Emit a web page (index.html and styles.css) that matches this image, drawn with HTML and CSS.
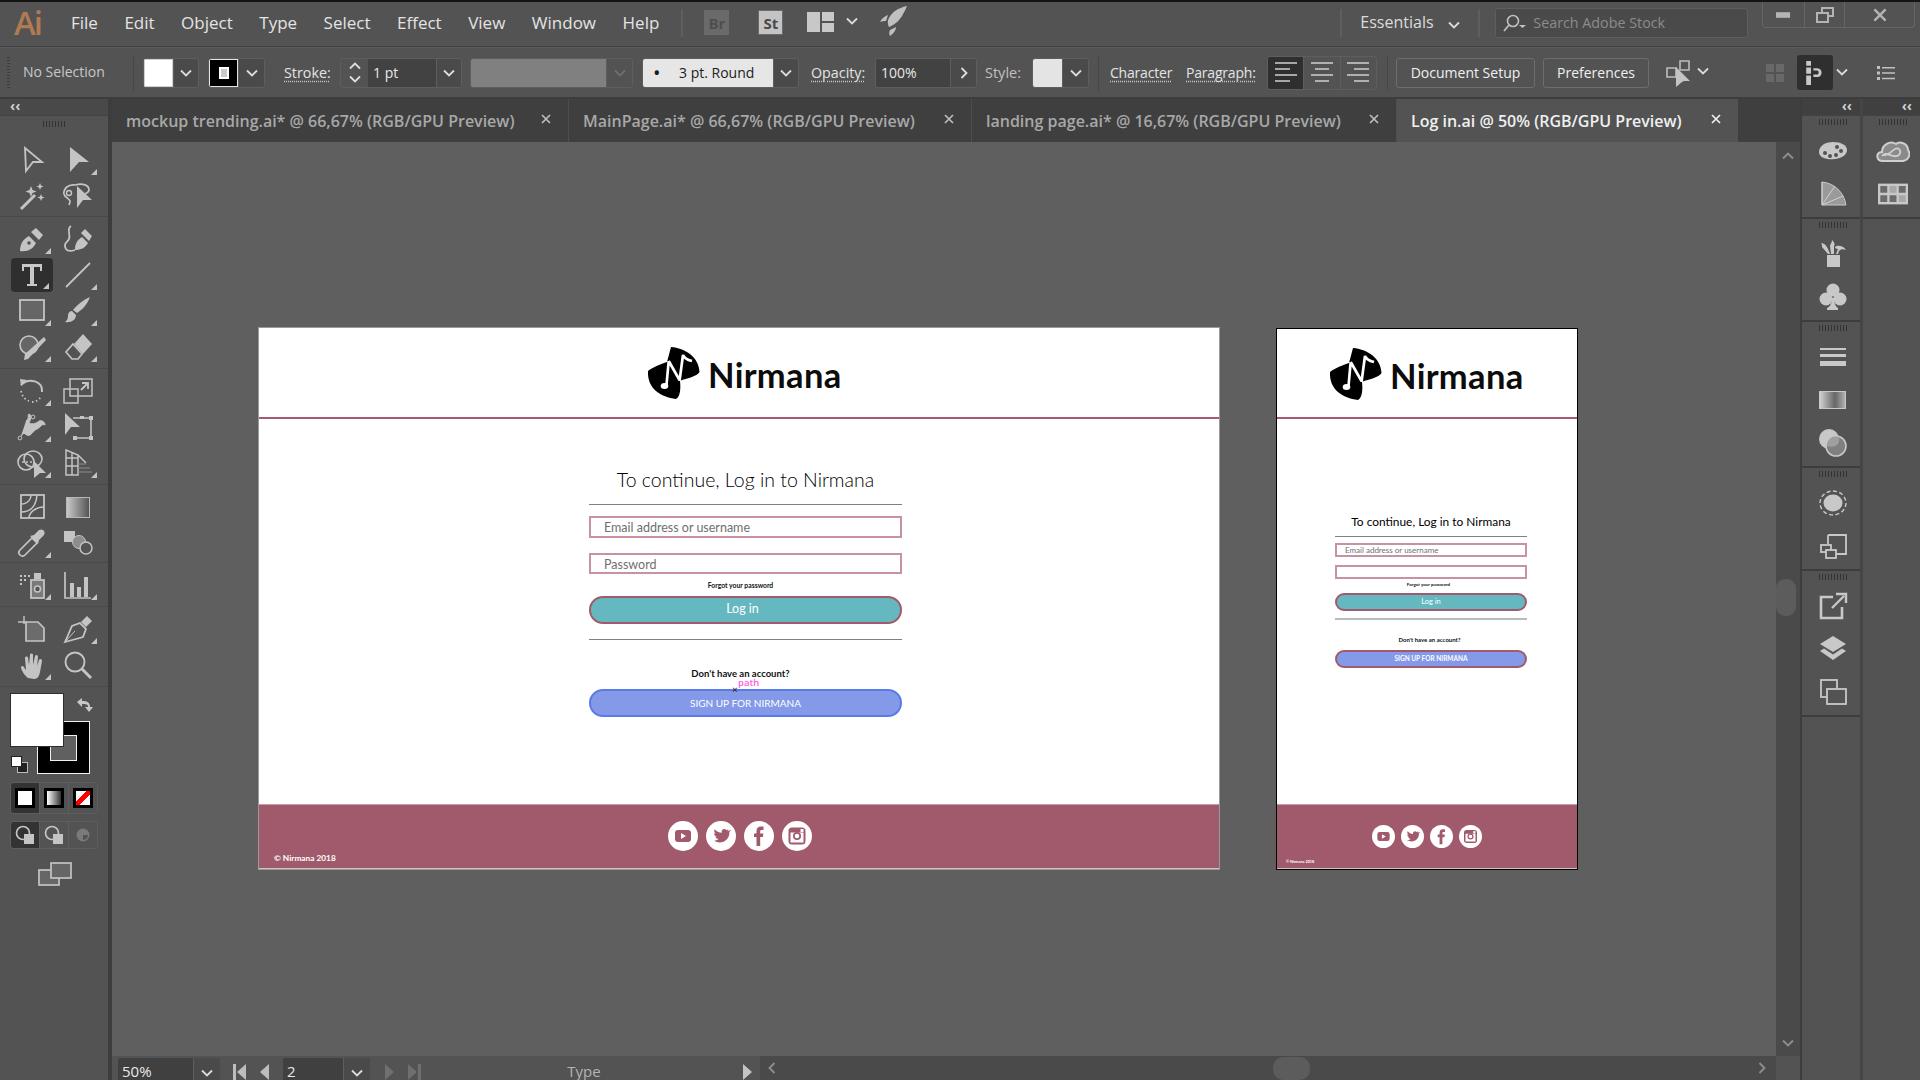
FILE: index.html
```html
<!DOCTYPE html>
<html lang="en">
<head>
<meta charset="utf-8">
<title>Log in.ai @ 50% (RGB/GPU Preview)</title>
<link rel="stylesheet" href="styles.css">
</head>
<body>
<svg class="defs" width="0" height="0" aria-hidden="true">
  <symbol id="chev" viewBox="0 0 12 8"><path d="M1 1.5l5 5 5-5" fill="none" stroke="currentColor" stroke-width="1.8"/></symbol>
  <symbol id="cross" viewBox="0 0 10 10"><path d="M1 1l8 8M9 1l-8 8" fill="none" stroke="currentColor" stroke-width="1.7"/></symbol>
  <symbol id="logo" viewBox="0 0 53 52">
    <path d="M24 0C38 1 52 10 52.500 25C50 29 42 31 35 33L33 34C34 42 33 50 29 52C14 50 0 42 1 24C6 20 14 17 20 15z" fill="#000"/>
    <path d="M21.700 14L19.500 38M21.700 14L32.500 33M32.500 34L36 8C37 11 41 13 45 14" fill="none" stroke="#fff" stroke-width="2.700"/>
    <ellipse cx="17.500" cy="39" rx="3.800" ry="3" fill="#fff"/>
  </symbol>
  <symbol id="yt" viewBox="0 0 30 30"><circle cx="15" cy="15" r="15" fill="#fff"/><rect x="7" y="9" width="16" height="12" rx="3" fill="#a05a6c"/><path d="M13 12l5 3-5 3z" fill="#fff"/></symbol>
  <symbol id="tw" viewBox="0 0 30 30"><circle cx="15" cy="15" r="15" fill="#fff"/><path d="M23 9.500c-.7.400-1.400.600-2 .700.700-.500 1.300-1.100 1.500-2-.7.400-1.400.700-2.200.800-1.700-1.900-5.300-.6-4.600 2.700-2.800-.1-5.300-1.500-7-3.500-.9 1.600-.4 3.500 1 4.500-.6 0-1.100-.2-1.600-.4 0 1.700 1.200 3.100 2.800 3.500-.5.100-1 .1-1.500 0 .5 1.300 1.700 2.300 3.200 2.300-1.500 1.200-3.300 1.700-5 1.500 7 4.400 16.300.6 15.800-8.800.7-.500 1.200-1.100 1.600-1.800z" fill="#a05a6c"/></symbol>
  <symbol id="fb" viewBox="0 0 30 30"><circle cx="15" cy="15" r="15" fill="#fff"/><path d="M12.500 25v-9H10v-3.500h2.500V10c0-3 1.700-4.500 4.300-4.500H19.500V9h-1.800c-1.200 0-1.500.6-1.500 1.500v2h3.200l-.5 3.500h-2.700v9z" fill="#a05a6c"/></symbol>
  <symbol id="ig" viewBox="0 0 30 30"><circle cx="15" cy="15" r="15" fill="#fff"/><rect x="6.500" y="6.500" width="17" height="17" rx="3.500" fill="#a05a6c"/><rect x="8.500" y="11.500" width="13" height="10" fill="#fff"/><circle cx="15" cy="15" r="4" fill="#a05a6c"/><circle cx="15" cy="15" r="2.300" fill="#fff"/><rect x="18.500" y="8" width="3" height="3" fill="#fff"/></symbol>
</svg>

<div class="app">
  <div class="topline"></div>

  <header class="menubar">
    <div class="ai-logo">Ai</div>
    <nav class="menu">
      <span>File</span><span>Edit</span><span>Object</span><span>Type</span><span>Select</span><span>Effect</span><span>View</span><span>Window</span><span>Help</span>
    </nav>
    <div class="vsep sep-a"></div>
    <div class="app-badge br">Br</div>
    <div class="app-badge st">St</div>
    <svg class="layout-ic" viewBox="0 0 27 20"><path d="M0 0h13v20H0zM15 0h12v9H15zM15 11h12v9H15z" fill="#c8c8c8"/></svg>
    <svg class="chev mb-chev"><use href="#chev"/></svg>
    <svg class="rocket" viewBox="0 0 27 30"><path d="M27 0C18 2 12 6 9 12c-2 3-1 7 0 9 6-2 12-8 14-13 2-3 3-6 4-8zM8 9c-3 1-6 3-8 7 2-1 4-1 6-1zM16 21c0 3-2 6-6 9-1-2-1-4 0-6z" fill="#c0c0c0"/></svg>
    <div class="vsep sep-b"></div>
    <div class="workspace-name">Essentials</div>
    <svg class="chev ws-chev"><use href="#chev"/></svg>
    <div class="vsep sep-c"></div>
    <div class="search">
      <svg class="search-ic" viewBox="0 0 26 18"><circle cx="11" cy="7" r="5.500" fill="none" stroke="#c0c0c0" stroke-width="1.600"/><path d="M7 11l-5 6" stroke="#c0c0c0" stroke-width="1.800"/><path d="M17 11h7l-3.500 3z" fill="#c0c0c0"/></svg>
      <span>Search Adobe Stock</span>
    </div>
    <div class="winctl">
      <div class="wc wc-min"><svg viewBox="0 0 16 8" class="wi"><rect y="1" width="15" height="6" fill="#b4b4b4"/></svg></div>
      <div class="wc wc-max"><svg viewBox="0 0 18 16" class="wi wi-l"><path d="M5 0h13v10h-5v6H0V5h5zM7 2v3h6v3h3V2zM2 7v7h9V7z" fill="#b4b4b4" fill-rule="evenodd"/></svg></div>
      <div class="wc wc-close"><svg class="wi wi-x"><use href="#cross"/></svg></div>
    </div>
  </header>

  <section class="controlbar">
    <div class="grip-v"></div>
    <div class="nosel">No Selection</div>
    <div class="cdiv d1"></div>
    <div class="cgroup g-fill"><div class="swatch white"></div><div class="caret"><svg class="chev"><use href="#chev"/></svg></div></div>
    <div class="cgroup g-stroke"><div class="swatch stroke-sw"><i></i></div><div class="caret"><svg class="chev"><use href="#chev"/></svg></div></div>
    <div class="clabel l-stroke link">Stroke:</div>
    <div class="cgroup g-weight">
      <div class="stepper"><svg class="chev up"><use href="#chev"/></svg><svg class="chev"><use href="#chev"/></svg></div>
      <div class="cinput w-weight">1 pt</div>
      <div class="caret"><svg class="chev"><use href="#chev"/></svg></div>
    </div>
    <div class="cgroup g-gray"><div class="graybox"></div><div class="caret dim"><svg class="chev"><use href="#chev"/></svg></div></div>
    <div class="cgroup g-round"><div class="roundbox"><b>•</b><span>3 pt. Round</span></div><div class="caret"><svg class="chev"><use href="#chev"/></svg></div></div>
    <div class="clabel l-opacity link">Opacity:</div>
    <div class="cgroup g-opacity">
      <div class="cinput w-opacity">100%</div>
      <div class="caret"><svg class="chev right"><use href="#chev"/></svg></div>
    </div>
    <div class="clabel l-style">Style:</div>
    <div class="cgroup g-style"><div class="swatch pale"></div><div class="caret"><svg class="chev"><use href="#chev"/></svg></div></div>
    <div class="cdiv d2"></div>
    <div class="clabel l-char link">Character</div>
    <div class="clabel l-para link">Paragraph:</div>
    <div class="aligns">
      <div class="alg on"><svg viewBox="0 0 24 22"><path d="M1 1h22M1 7h15M1 13h22M1 19h15" stroke="#d0d0d0" stroke-width="1.600"/></svg></div>
      <div class="alg"><svg viewBox="0 0 24 22"><path d="M1 1h22M5 7h14M1 13h22M5 19h14" stroke="#d0d0d0" stroke-width="1.600"/></svg></div>
      <div class="alg"><svg viewBox="0 0 24 22"><path d="M1 1h22M8 7h15M1 13h22M8 19h15" stroke="#d0d0d0" stroke-width="1.600"/></svg></div>
    </div>
    <div class="cdiv d3"></div>
    <div class="btn b-doc">Document Setup</div>
    <div class="btn b-pref">Preferences</div>
    <svg class="tr-ic" viewBox="0 0 26 28"><path d="M2 9h9v9H2zM15 2h9v9H15z" fill="#535353" stroke="#bdbdbd" stroke-width="1.600"/><path d="M11 8l14 14h-6l-2 1-6 5z" fill="#c4c4c4"/></svg>
    <svg class="chev tr-chev"><use href="#chev"/></svg>
    <svg class="gr-ic" viewBox="0 0 18 18"><path d="M0 0h8v8H0zM10 0h8v8h-8zM0 10h8v8H0zM10 10h8v8h-8z" fill="#696969"/></svg>
    <div class="snap"><svg viewBox="0 0 22 30"><path d="M0 0h6v6H0zM0 8h6v8H0zM0 18h6v12H0zM9 9h5c7 0 7 11 0 11H9v-3h5c2 0 2-5 0-5H9z" fill="#c8c8c8"/></svg></div>
    <svg class="chev sn-chev"><use href="#chev"/></svg>
    <svg class="ls-ic" viewBox="0 0 18 14"><path d="M0 0h3v3H0zM5 1h13v1.500H5zM0 5.500h3v3H0zM5 6.300h13v1.500H5zM0 11h3v3H0zM5 11.700h13v1.500H5z" fill="#c0c0c0"/></svg>
  </section>

  <main class="workspace">
    <aside class="toolbar">
      <div class="panel-head"><span class="collapse">‹‹</span></div>
      <div class="grip-h"></div>
      <div class="tgroup first">
        <div class="tool"><svg viewBox="0 0 30 30"><path d="M8 3l17 14h-9l-7 9z" fill="none" stroke="#c4c4c4" stroke-width="1.800"/></svg></div>
        <div class="tool fly"><svg viewBox="0 0 30 30"><path d="M7 2l19 15H16l-9 10z" fill="#c4c4c4"/></svg></div>
        <div class="tool"><svg viewBox="0 0 30 30"><path d="M4 28l14-14" stroke="#c4c4c4" stroke-width="3"/><path d="M14 5l1.500 4 4 1.500-4 1.500-1.500 4-1.500-4-4-1.500 4-1.500zM23 2l1 2.500 2.500 1-2.500 1-1 2.500-1-2.500L19.500 5.500l2.500-1zM24 13l1 2.500 2.500 1-2.500 1-1 2.500-1-2.500-2.500-1 2.500-1z" fill="#c4c4c4"/></svg></div>
        <div class="tool"><svg viewBox="0 0 30 30"><path d="M12 4C5 3 0 8 1 13c1 4 5 4 6 7 0 2-1 4-1 4M12 4c8-2 14 0 14 5 0 2-2 3-4 4" fill="none" stroke="#c4c4c4" stroke-width="1.700"/><circle cx="6" cy="12" r="2.500" fill="none" stroke="#c4c4c4" stroke-width="1.400"/><path d="M14 5l15 14H20l-6 8z" fill="#c4c4c4"/></svg></div>
      </div>
      <div class="tgroup">
        <div class="tool fly"><svg viewBox="0 0 30 30"><path d="M3 27c0-7 3-12 9-15l7 7c-3 6-8 9-16 8zM19 4l7 7-4 5-8-8z" fill="#c4c4c4"/><circle cx="12" cy="19" r="1.800" fill="#535353"/></svg></div>
        <div class="tool"><svg viewBox="0 0 30 30"><path d="M12 26c0-6 2-10 7-13l6 6c-3 5-7 7-13 7zM22 5l7 7-3 5-8-8z" fill="#c4c4c4"/><path d="M8 2C3 5 8 10 6 15c-2 4-6 4-3 10 2 3 6 2 9 1" fill="none" stroke="#c4c4c4" stroke-width="1.800"/></svg></div>
        <div class="tool selected fly"><svg viewBox="0 0 30 30"><path d="M5 4h20v7h-2V7h-6v17h3v2H10v-2h3V7H7v4H5z" fill="#c8c8c8"/></svg></div>
        <div class="tool fly"><svg viewBox="0 0 30 30"><path d="M3 27L27 3" stroke="#c4c4c4" stroke-width="1.800"/></svg></div>
        <div class="tool fly"><svg viewBox="0 0 30 30"><rect x="3" y="4" width="24" height="20" fill="#666" stroke="#c4c4c4" stroke-width="1.800"/></svg></div>
        <div class="tool fly"><svg viewBox="0 0 30 30"><path d="M27 1c-3 8-8 13-13 16l-4-3C14 9 20 4 27 1zM9 15l4 4c0 5-5 8-11 7 3-2 3-5 3-7 0-2 2-4 4-4z" fill="#c4c4c4"/></svg></div>
        <div class="tool fly"><svg viewBox="0 0 30 30"><circle cx="12" cy="13" r="9" fill="#666" stroke="#c4c4c4" stroke-width="1.600"/><path d="M8 22L27 5l2 3L11 27l-4 1z" fill="#c4c4c4"/></svg></div>
        <div class="tool fly"><svg viewBox="0 0 30 30"><path d="M19 2l9 10-9 10-9-10z" fill="#c4c4c4" transform="translate(1 0)"/><path d="M10 12l9 10-4 5H9l-6-7z" fill="#535353" stroke="#c4c4c4" stroke-width="1.700"/></svg></div>
      </div>
      <div class="tgroup">
        <div class="tool fly"><svg viewBox="0 0 30 30"><path d="M4 9C12 1 26 5 25 16" fill="none" stroke="#c4c4c4" stroke-width="2"/><path d="M3 3l7 1-6 6z" fill="#c4c4c4"/><path d="M4 15c1 5 4 9 8 10M15 26c4 0 8-3 9-6" fill="none" stroke="#c4c4c4" stroke-width="1.800" stroke-dasharray="1.500 2.500"/></svg></div>
        <div class="tool"><svg viewBox="0 0 30 30"><rect x="1" y="13" width="14" height="14" fill="none" stroke="#c4c4c4" stroke-width="1.500"/><rect x="7" y="3" width="22" height="17" fill="none" stroke="#c4c4c4" stroke-width="1.500"/><path d="M18 14l6-6M19 7h6v6" fill="none" stroke="#c4c4c4" stroke-width="1.800"/></svg></div>
        <div class="tool fly"><svg viewBox="0 0 30 30"><path d="M9 9c4-3 1-6 3-7 3 1 2 5 0 9 4 2 8 0 10-2 3-1 6 1 6 4-3-2-4 2-8 4-3 1-4 4-7 6-2 1-4 0-6-2l-3 3" fill="#c4c4c4" stroke="#c4c4c4" stroke-width="1"/><circle cx="3" cy="26" r="1.900" fill="#535353" stroke="#c4c4c4"/><circle cx="16" cy="5" r="1.900" fill="#535353" stroke="#c4c4c4"/></svg></div>
        <div class="tool"><svg viewBox="0 0 30 30"><path d="M2 1l15 14H8l-6 8z" fill="#c4c4c4"/><path d="M10 6h18v20H10" fill="none" stroke="#c4c4c4" stroke-width="1.600"/><path d="M26 4h4v4h-4zM26 24h4v4h-4zM17 4h4v3h-4zM10 24h4v4h-4z" fill="#c4c4c4"/></svg></div>
        <div class="tool fly"><svg viewBox="0 0 30 30"><ellipse cx="9" cy="14" rx="8" ry="8" fill="none" stroke="#c4c4c4" stroke-width="1.600"/><ellipse cx="16" cy="11" rx="9" ry="8" fill="none" stroke="#c4c4c4" stroke-width="1.600"/><path d="M5 14h10" stroke="#c4c4c4" stroke-width="1.600" stroke-dasharray="2 2"/><path d="M17 13l12 12h-6l-6 5z" fill="#c4c4c4"/></svg></div>
        <div class="tool fly"><svg viewBox="0 0 30 30"><path d="M3 2l12 5v20H3zM15 7l8 8M3 10h12M3 18h12M9 4v23" fill="none" stroke="#c4c4c4" stroke-width="1.500"/><path d="M15 16h8M15 20h12M15 24h14" stroke="#8b8b8b" stroke-width="1.200"/></svg></div>
      </div>
      <div class="tgroup tight">
        <div class="tool"><svg viewBox="0 0 30 30"><rect x="4" y="3" width="23" height="23" fill="none" stroke="#c4c4c4" stroke-width="1.800"/><path d="M4 12C12 12 14 6 14 3M4 20c9 0 15-4 16-17M12 26c0-5 6-11 15-11" fill="none" stroke="#c4c4c4" stroke-width="1.500"/></svg></div>
        <div class="grad-tool-wrap tool"><div class="grad-ic"></div></div>
        <div class="tool fly"><svg viewBox="0 0 30 30"><path d="M3 27c-2-2-1-4 0-5L15 10l5 5L8 27c-1 1-3 2-5 0z" fill="none" stroke="#c4c4c4" stroke-width="1.700"/><path d="M13 8l4-1 5-5c4-2 7 2 5 5l-5 5-1 4z" fill="#c4c4c4"/></svg></div>
        <div class="tool"><svg viewBox="0 0 30 30"><rect x="1" y="3" width="11" height="11" fill="#c4c4c4"/><circle cx="16" cy="14" r="6.500" fill="#8d8d8d" stroke="#c4c4c4"/><circle cx="23" cy="20" r="6" fill="#535353" stroke="#c4c4c4" stroke-width="1.500"/></svg></div>
      </div>
      <div class="tgroup">
        <div class="tool fly"><svg viewBox="0 0 30 30"><path d="M3 5h2v2H3zM7 5h2v2H7zM11 5h2v2h-2zM3 9h2v2H3zM7 9h2v2H7zM3 13h2v2H3z" fill="#c4c4c4"/><rect x="14" y="10" width="13" height="18" fill="#7a7a7a" stroke="#c4c4c4" stroke-width="1.800"/><rect x="17" y="3" width="7" height="6" fill="#c4c4c4"/><circle cx="20.500" cy="19" r="3" fill="#535353" stroke="#c4c4c4" stroke-width="1.600"/></svg></div>
        <div class="tool fly"><svg viewBox="0 0 30 30"><path d="M2 2v26h26" fill="none" stroke="#c4c4c4" stroke-width="1.700"/><path d="M7 13h4v14H7zM14 17h4v10h-4zM21 7h4v20h-4z" fill="#c4c4c4"/></svg></div>
      </div>
      <div class="tgroup">
        <div class="tool"><svg viewBox="0 0 30 30"><path d="M1 8h8M7 2v8" stroke="#c4c4c4" stroke-width="1.400"/><path d="M9 8h12l6 6v13H9z" fill="#6c6c6c" stroke="#c4c4c4" stroke-width="1.700"/></svg></div>
        <div class="tool fly"><svg viewBox="0 0 30 30"><path d="M2 28l7-16 8-3 6 6-3 8z" fill="none" stroke="#c4c4c4" stroke-width="1.800"/><path d="M18 8l6-6 5 5-6 6z" fill="#c4c4c4"/><path d="M2 28l10-11" stroke="#c4c4c4"/></svg></div>
        <div class="tool fly"><svg viewBox="0 0 30 30"><path d="M11 28c-3-2-7-8-7-11 1-2 3-1 4 2l1 1-1-12c0-2 3-2 3 0l1 7 1-10c0-2 3-2 3 0v10l2-9c1-2 3-1 3 1l-1 9 2-6c1-2 3-1 3 1l-2 11c-1 5-3 7-6 7z" fill="#c4c4c4"/></svg></div>
        <div class="tool"><svg viewBox="0 0 30 30"><circle cx="12" cy="12" r="9.500" fill="none" stroke="#c4c4c4" stroke-width="1.900"/><path d="M19 19l9 9" stroke="#c4c4c4" stroke-width="3"/></svg></div>
      </div>
      <div class="swatches">
        <div class="big-stroke"><i></i></div>
        <div class="big-fill"></div>
        <svg class="swap" viewBox="0 0 18 16"><path d="M1 5l5-4v3c5 0 8 1 8 6h3l-4 5-4-5h3c0-3-2-3-6-3v3z" fill="#c8c8c8"/></svg>
        <div class="mini-default"><i></i><b></b></div>
      </div>
      <div class="modes">
        <div class="mode on"><span class="cbox solid"></span></div>
        <div class="mode"><span class="cbox gradient"></span></div>
        <div class="mode"><span class="cbox none"></span></div>
      </div>
      <div class="modes second">
        <div class="mode on"><svg viewBox="0 0 20 20"><circle cx="8" cy="8" r="6.500" fill="#333" stroke="#c4c4c4" stroke-width="1.700"/><rect x="9" y="9" width="10" height="10" fill="#c4c4c4"/></svg></div>
        <div class="mode"><svg viewBox="0 0 20 20"><circle cx="8" cy="8" r="6.500" fill="#535353" stroke="#c4c4c4" stroke-width="1.700"/><rect x="9" y="9" width="10" height="10" fill="#c4c4c4"/></svg></div>
        <div class="mode"><svg viewBox="0 0 20 20"><circle cx="10" cy="10" r="6.500" fill="#7a7a7a"/><path d="M10 10h5a5 5 0 0 1-5 5z" fill="#535353"/></svg></div>
      </div>
      <svg class="screenmode" viewBox="0 0 34 24"><rect x="1" y="8" width="20" height="15" fill="#666" stroke="#c4c4c4" stroke-width="1.700"/><rect x="13" y="1" width="20" height="15" fill="#666" stroke="#c4c4c4" stroke-width="1.700"/></svg>
    </aside>

    <div class="center">
      <div class="tabs">
        <div class="tab t1"><span>mockup trending.ai* @ 66,67% (RGB/GPU Preview)</span><svg class="x"><use href="#cross"/></svg></div>
        <div class="tab t2"><span>MainPage.ai* @ 66,67% (RGB/GPU Preview)</span><svg class="x"><use href="#cross"/></svg></div>
        <div class="tab t3"><span>landing page.ai* @ 16,67% (RGB/GPU Preview)</span><svg class="x"><use href="#cross"/></svg></div>
        <div class="tab active"><span>Log in.ai @ 50% (RGB/GPU Preview)</span><svg class="x"><use href="#cross"/></svg></div>
      </div>
      <div class="stage">
        <div class="canvas">
          <article class="artboard ab1">
            <div class="ab-head">
              <svg class="logo"><use href="#logo"/></svg>
              <span class="brand">Nirmana</span>
            </div>
            <div class="form f1">
              <h1>To continue, Log in to Nirmana</h1>
              <div class="rule r1"></div>
              <div class="field fa">Email address or username</div>
              <div class="field fb">Password</div>
              <div class="forgot">Forgot your password</div>
              <div class="pill login">Log in</div>
              <div class="rule r2"></div>
              <div class="noacc">Don't have an account?</div>
              <div class="pill signup">SIGN UP FOR NIRMANA
                <span class="hint">path</span><span class="cursor">×</span>
              </div>
            </div>
            <footer class="ab-foot">
              <div class="social">
                <svg><use href="#yt"/></svg><svg><use href="#tw"/></svg><svg><use href="#fb"/></svg><svg><use href="#ig"/></svg>
              </div>
              <div class="copy">© Nirmana 2018</div>
            </footer>
          </article>

          <article class="artboard ab2">
            <div class="ab-head">
              <svg class="logo"><use href="#logo"/></svg>
              <span class="brand">Nirmana</span>
            </div>
            <div class="form f2">
              <h1>To continue, Log in to Nirmana</h1>
              <div class="rule r1"></div>
              <div class="field fa">Email address or username</div>
              <div class="field fb"></div>
              <div class="forgot">Forgot your password</div>
              <div class="pill login">Log in</div>
              <div class="rule r2"></div>
              <div class="noacc">Don't have an account?</div>
              <div class="pill signup">SIGN UP FOR NIRMANA</div>
            </div>
            <footer class="ab-foot">
              <div class="social">
                <svg><use href="#yt"/></svg><svg><use href="#tw"/></svg><svg><use href="#fb"/></svg><svg><use href="#ig"/></svg>
              </div>
              <div class="copy">© Nirmana 2018</div>
            </footer>
          </article>
        </div>
        <div class="vscroll">
          <svg class="chev up"><use href="#chev"/></svg>
          <div class="vthumb"></div>
          <svg class="chev"><use href="#chev"/></svg>
        </div>
      </div>
      <div class="status">
        <div class="st-left">
          <div class="sinput s-zoom">50%</div>
          <div class="scaret"><svg class="chev"><use href="#chev"/></svg></div>
          <svg class="nav n1" viewBox="0 0 37 16"><path d="M0 0h3v16H0zM13 0v16l-9-8zM36 0v16l-9-8z" fill="#bdbdbd"/></svg>
          <div class="sinput s-page">2</div>
          <div class="scaret"><svg class="chev"><use href="#chev"/></svg></div>
          <svg class="nav n2" viewBox="0 0 37 16"><path d="M0 0l9 8-9 8zM23 0l9 8-9 8zM33 0h3v16h-3z" fill="#6f6f6f"/></svg>
          <div class="stype">Type</div>
          <svg class="nav n3" viewBox="0 0 9 16"><path d="M0 0l9 8-9 8z" fill="#c4c4c4"/></svg>
        </div>
        <div class="hscroll">
          <svg class="chev left"><use href="#chev"/></svg>
          <div class="hthumb"></div>
          <svg class="chev right"><use href="#chev"/></svg>
        </div>
        <div class="corner"></div>
      </div>
    </div>

    <aside class="dock">
      <div class="dock-col">
        <div class="panel-head right"><span class="collapse">‹‹</span></div>
        <div class="dgroup d2i">
          <div class="grip-h"></div>
          <div class="dtool"><svg viewBox="0 0 30 30"><path d="M15 6c8 0 14 3 14 8 0 4-4 8-12 9-8 1-16-1-16-7C1 10 7 6 15 6z" fill="#c8c8c8"/><circle cx="7" cy="17" r="2" fill="#535353"/><circle cx="12" cy="20" r="2" fill="#535353"/><circle cx="18" cy="19" r="2" fill="#535353"/><circle cx="23" cy="15" r="2" fill="#535353"/><circle cx="19" cy="11" r="2" fill="#535353"/></svg></div>
          <div class="dtool"><svg viewBox="0 0 30 30"><path d="M4 3c12 1 22 10 24 23H4z" fill="#9a9a9a" stroke="#c8c8c8"/><path d="M4 26L4 3M4 26L17 7M4 26L25 17" stroke="#cfcfcf"/></svg></div>
        </div>
        <div class="dgroup d2i">
          <div class="grip-h"></div>
          <div class="dtool"><svg viewBox="0 0 30 30"><path d="M9 16h13v12H9z" fill="#c8c8c8"/><path d="M13 15l-1-8c0-2 2-3 2-6 3 3 3 5 2 6v8zM10 15L4 8c0-2 0-3-1-4 4 0 6 4 7 6l2 5zM18 15l2-5c-2 0-3-1-3-2 2-2 8-2 11 3-3-1-5-1-7 1l-1 3z" fill="#c8c8c8"/></svg></div>
          <div class="dtool"><svg viewBox="0 0 30 30"><circle cx="15" cy="8" r="6.500" fill="#c8c8c8"/><circle cx="8" cy="17" r="6.500" fill="#c8c8c8"/><circle cx="22" cy="17" r="6.500" fill="#c8c8c8"/><path d="M14 16h2c0 5 2 9 4 10v2H9v-2c3-1 5-5 5-10z" fill="#c8c8c8"/></svg></div>
        </div>
        <div class="dgroup d3i">
          <div class="grip-h"></div>
          <div class="dtool"><svg viewBox="0 0 30 30"><path d="M2 6h26v2H2zM2 12h26v3H2zM2 19h26v5H2z" fill="#c8c8c8"/></svg></div>
          <div class="dtool"><div class="grad-dock"></div></div>
          <div class="dtool"><svg viewBox="0 0 30 30"><circle cx="11" cy="11" r="10" fill="#c8c8c8"/><circle cx="18" cy="18" r="10" fill="#808080" stroke="#c8c8c8" stroke-width="1.600"/><path d="M9 18a9 9 0 0 1 12-9c1 4-1 8-4 9-3 1-6 1-8 0z" fill="#9f9f9f"/></svg></div>
        </div>
        <div class="dgroup d2i">
          <div class="grip-h"></div>
          <div class="dtool"><svg viewBox="0 0 30 30"><ellipse cx="15" cy="15" rx="9.500" ry="8.500" fill="#c8c8c8"/><ellipse cx="15" cy="15" rx="13" ry="12" fill="none" stroke="#c8c8c8" stroke-width="1.400" stroke-dasharray="4 2.500"/></svg></div>
          <div class="dtool"><svg viewBox="0 0 30 30"><path d="M10 4h18v19H18" fill="none" stroke="#c8c8c8" stroke-width="1.800"/><path d="M10 4v9" stroke="#c8c8c8" stroke-width="1.800"/><rect x="3" y="14" width="10" height="7" fill="none" stroke="#c8c8c8" stroke-width="1.800"/><rect x="8" y="19" width="10" height="8" fill="#535353" stroke="#c8c8c8" stroke-width="1.800"/></svg></div>
        </div>
        <div class="dgroup d3i last">
          <div class="grip-h"></div>
          <div class="dtool"><svg viewBox="0 0 30 30"><path d="M15 6H3v21h21V16" fill="none" stroke="#c8c8c8" stroke-width="2.600"/><path d="M14 17L26 5M18 3h10v9" fill="none" stroke="#c8c8c8" stroke-width="2.400"/></svg></div>
          <div class="dtool"><svg viewBox="0 0 30 30"><path d="M15 2l13 8-13 8-13-8z" fill="#c8c8c8"/><path d="M2 17l4-2.500 9 6 9-6 4 2.500-13 9z" fill="#c8c8c8"/></svg></div>
          <div class="dtool"><svg viewBox="0 0 30 30"><rect x="3" y="3" width="16" height="17" fill="none" stroke="#c8c8c8" stroke-width="1.800"/><rect x="9" y="12" width="19" height="15" fill="#535353" stroke="#c8c8c8" stroke-width="1.800"/></svg></div>
        </div>
      </div>
      <div class="dock-col two">
        <div class="panel-head right"><span class="collapse">‹‹</span></div>
        <div class="dgroup d2i">
          <div class="grip-h"></div>
          <div class="dtool"><svg class="cc" viewBox="0 0 34 24"><path d="M3 21c-3-3-2-8 3-8 0-7 8-12 14-8 3-3 12-1 12 6 3 4 1 10-5 11H8c-2 0-4 0-5-1z" fill="#8a8a8a" stroke="#cfcfcf" stroke-width="2"/><path d="M6 17c5-6 11 4 17-1 3-4 0-8-4-6-4 2-6 7-11 6" fill="none" stroke="#cfcfcf" stroke-width="1.800"/></svg></div>
          <div class="dtool"><svg viewBox="0 0 26 18"><rect width="26" height="18" fill="#c8c8c8"/><path d="M2 2h6v6H2zM2 10h6v6H2zM10 10h6v6h-6zM18 2h6v6h-6z" fill="#6b6b6b"/><path d="M10 2h6v6h-6zM18 10h6v6h-6z" fill="#a8a8a8"/></svg></div>
        </div>
      </div>
    </aside>
  </main>
</div>
</body>
</html>
```

FILE: styles.css
```css
* { box-sizing: border-box; }
html, body { margin: 0; padding: 0; }
body { width: 1920px; height: 1080px; overflow: hidden; background: #535353; font-family: "Open Sans", "Noto Sans", sans-serif; color: #e6e6e6; }
.defs { position: absolute; }
svg { display: block; flex: none; }
.chev { width: 12px; height: 8px; color: #dcdcdc; }
.chev.up { transform: rotate(180deg); }
.chev.right { transform: rotate(-90deg); }
.chev.left { transform: rotate(90deg); }

.app { width: 1920px; height: 1080px; display: flex; flex-direction: column; }
.topline { height: 2px; background: #141414; flex: none; }

/* Menu bar */
.menubar { height: 45px; flex: none; display: flex; align-items: center; background: #535353; border-bottom: 1px solid #3f3f3f; padding-bottom: 3px; position: relative; }
.ai-logo { width: 28px; margin-left: 14px; margin-right: -2px; font-size: 33px; line-height: 36px; font-weight: 600; color: #b07a52; letter-spacing: -2px; flex: none; }
.menu { display: flex; gap: 26.500px; margin-left: 31px; font-size: 17px; color: #e4e4e4; flex: none; }
.vsep { width: 2px; height: 28px; background: #5e5e5e; flex: none; }
.sep-a { margin-left: 22px; }
.app-badge { width: 25px; height: 25px; font-size: 15px; font-weight: 700; text-align: center; line-height: 24px; border: 1px solid #6a6a6a; flex: none; }
.br { margin-left: 21px; background: #6a6a6a; color: #4f4f4f; }
.st { margin-left: 29px; background: #c4c4c4; color: #4a4a4a; }
.layout-ic { width: 27px; height: 20px; margin-left: 24px; margin-top: -2px; }
.mb-chev { margin-left: 12px; margin-top: -4px; }
.rocket { width: 27px; height: 30px; margin-left: 22px; margin-top: -4px; }
.sep-b { margin-left: 433px; }
.workspace-name { margin-left: 18px; font-size: 16px; width: 73px; white-space: nowrap; margin-top: -1px; color: #dcdcdc; flex: none; }
.ws-chev { margin-left: 15px; margin-top: 4px; }
.sep-c { margin-left: 18px; }
.search { width: 253px; height: 30px; margin-left: 15px; background: #4a4a4a; border: 1px solid #5e5e5e; border-radius: 3px; display: flex; align-items: center; padding-left: 6px; gap: 5px; font-size: 14.300px; color: #8c8c8c; flex: none; }
.search-ic { width: 26px; height: 18px; }
.winctl { position: absolute; right: 5px; top: 0; height: 26px; width: 153px; display: flex; border: 1px solid #656565; border-top: none; border-radius: 0 0 4px 4px; }
.wc { display: flex; align-items: center; justify-content: center; border-right: 1px solid #656565; }
.wc-min { width: 42px; }
.wc-max { width: 40px; }
.wc-close { flex: 1; border-right: none; }
.wi { width: 15px; height: 8px; }
.wi-l { width: 18px; height: 16px; }
.wi-x { width: 14px; height: 14px; color: #b4b4b4; }

/* Control bar */
.controlbar { height: 52px; flex: none; display: flex; align-items: center; background: #535353; border-bottom: 2px solid #3d3d3d; border-top: 1px solid #5c5c5c; }
.grip-v { width: 3px; height: 32px; margin-left: 7px; background: repeating-linear-gradient(180deg, #3c3c3c 0 1px, transparent 1px 3px); flex: none; }
.nosel { width: 110px; margin-left: 13px; font-size: 14px; color: #c8c8c8; white-space: nowrap; margin-top: -3px; flex: none; }
.cdiv { width: 1px; height: 36px; background: #474747; flex: none; }
.d2 { margin-left: 9px; }
.d3 { margin-left: 10px; }
.cgroup { display: flex; height: 30px; border: 1px solid #5e5e5e; border-radius: 3px; flex: none; overflow: hidden; }
.g-fill { width: 56px; margin-left: 9px; }
.g-stroke { width: 57px; margin-left: 9px; }
.g-weight { width: 122px; margin-left: 9px; }
.g-gray { width: 163px; margin-left: 8px; }
.g-round { width: 157px; margin-left: 9px; }
.g-opacity { width: 102px; margin-left: 10px; }
.g-style { width: 57px; margin-left: 10px; }
.swatch { width: 29px; flex: none; }
.swatch.white { background: #fff; border: 1px solid #cfcfcf; }
.swatch.pale { background: #e4e4e4; }
.stroke-sw { background: #000; border: 1px solid #e4e4e4; display: flex; align-items: center; justify-content: center; }
.stroke-sw i { display: block; background: #c9c9c9; border: 2px solid #fff; box-sizing: content-box; width: 6px; height: 8px; }
.caret { flex: 1; display: flex; align-items: center; justify-content: center; background: #4a4a4a; border-left: 1px solid #5e5e5e; }
.caret.dim { background: #535353; }
.caret.dim .chev { color: #6e6e6e; }
.stepper { width: 27px; display: flex; flex-direction: column; align-items: center; justify-content: center; gap: 5px; flex: none; }
.cinput { background: #424242; font-size: 14px; color: #e8e8e8; padding-left: 5px; line-height: 27px; flex: none; }
.w-weight { width: 68px; }
.w-opacity { width: 74px; }
.graybox { width: 135px; background: #808080; flex: none; }
.roundbox { width: 130px; background: #e6e6e6; color: #1c1c1c; display: flex; align-items: center; font-size: 14px; padding-left: 10px; flex: none; }
.roundbox b { width: 26px; font-weight: 400; font-size: 20px; line-height: 20px; }
.clabel { font-size: 14px; white-space: nowrap; color: #e4e4e4; flex: none; }
.link { text-decoration: underline dotted #c8c8c8; text-underline-offset: 3px; }
.l-stroke { width: 47px; margin-left: 19px; font-size: 14.300px; }
.l-opacity { width: 54px; margin-left: 12px; font-size: 14.300px; }
.l-style { width: 37px; margin-left: 8px; color: #c0c0c0; font-size: 14.500px; }
.l-char { width: 63px; margin-left: 11px; letter-spacing: -.2px; }
.l-para { width: 71px; margin-left: 13px; letter-spacing: -.2px; }
.aligns { width: 110px; height: 34px; margin-left: 10px; display: flex; border: 1px solid #5e5e5e; border-radius: 3px; flex: none; overflow: hidden; }
.alg { flex: 1; display: flex; align-items: center; justify-content: center; border-right: 1px solid #5e5e5e; }
.alg:last-child { border-right: none; }
.alg.on { background: #2f2f2f; }
.alg svg { width: 24px; height: 22px; }
.btn { height: 30px; border: 1px solid #6e6e6e; border-radius: 3px; font-size: 14px; color: #f0f0f0; display: flex; align-items: center; justify-content: center; white-space: nowrap; flex: none; }
.b-doc { width: 139px; margin-left: 8px; }
.b-pref { width: 106px; margin-left: 8px; }
.tr-ic { width: 26px; height: 28px; margin-left: 16px; }
.tr-chev { margin-left: 6px; margin-top: -4px; }
.gr-ic { width: 18px; height: 18px; margin-left: 57px; }
.snap { width: 36px; height: 35px; margin-left: 13px; background: #2f2f2f; border-radius: 3px; display: flex; align-items: center; justify-content: center; flex: none; }
.snap svg { width: 22px; height: 24px; }
.sn-chev { margin-left: 3px; margin-top: -2px; }
.ls-ic { width: 18px; height: 14px; margin-left: 29px; }

/* Workspace */
.workspace { flex: 1; min-height: 0; display: flex; background: #3d3d3d; }
.toolbar { width: 108px; flex: none; background: #535353; display: flex; flex-direction: column; }
.panel-head { height: 17px; background: #494949; border-bottom: 1px solid #434343; flex: none; padding-left: 10px; font-size: 14px; line-height: 13px; color: #cfcfcf; }
.panel-head.right { text-align: right; padding: 0 8px 0 0; background: #404040; }
.collapse { font-weight: 700; }
.grip-h { width: 22px; height: 6px; margin: 5px auto 0; flex: none; background: repeating-linear-gradient(90deg, #333 0 1px, transparent 1px 3px); }
.tgroup { display: grid; grid-template-columns: 46px 46px; grid-auto-rows: 36px; padding: 4px 0 3px 9px; border-bottom: 1px solid #4a4a4a; flex: none; position: relative; }
.tgroup.first { padding-top: 15px; padding-bottom: 2px; }
.tgroup.tight { padding-bottom: 1px; }
.tool { display: flex; align-items: center; justify-content: center; position: relative; }
.tool svg { width: 30px; height: 30px; }
.tool.selected { background: #2f2f2f; border-radius: 4px; width: 42px; height: 34px; margin: 1px 0 0 2px; }
.fly::after { content: ""; position: absolute; right: 4px; bottom: 3px; width: 6px; height: 6px; background: #c4c4c4; clip-path: polygon(100% 0, 100% 100%, 0 100%); }
.grad-ic { width: 24px; height: 21px; background: linear-gradient(90deg, #c8c8c8, #555); border: 1px solid #b8b8b8; }
.swatches { height: 89px; position: relative; flex: none; }
.big-fill { position: absolute; left: 10px; top: 6px; width: 54px; height: 54px; background: #fff; border: 1px solid #2e2e2e; }
.big-stroke { position: absolute; left: 37px; top: 34px; width: 53px; height: 53px; background: #000; border: 1px solid #f0f0f0; display: flex; align-items: center; justify-content: center; }
.big-stroke i { display: block; width: 27px; height: 26px; background: #606060; border: 1px solid #f0f0f0; }
.swap { position: absolute; left: 76px; top: 10px; width: 18px; height: 16px; }
.mini-default { position: absolute; left: 10px; top: 68px; width: 20px; height: 20px; }
.mini-default b { position: absolute; left: 1px; top: 1px; width: 11px; height: 11px; background: #fff; border: 1px solid #222; }
.mini-default i { position: absolute; left: 7px; top: 7px; width: 11px; height: 11px; background: #222; border: 1px solid #bbb; }
.modes { margin: 6px 0 0 10px; width: 88px; height: 32px; display: flex; border: 1px solid #5e5e5e; border-radius: 4px; overflow: hidden; flex: none; }
.modes.second { height: 28px; margin-top: 7px; }
.mode { flex: 1; display: flex; align-items: center; justify-content: center; border-right: 1px solid #5e5e5e; }
.mode:last-child { border-right: none; }
.mode.on { background: #333; }
.mode svg { width: 20px; height: 20px; }
.cbox { width: 20px; height: 20px; border: 3px solid #000; display: block; }
.cbox.solid { background: #fff; }
.cbox.gradient { background: linear-gradient(90deg, #fff, #333); }
.cbox.none { background: linear-gradient(135deg, #fff 0 38%, #f00 38% 62%, #fff 62%); }
.screenmode { width: 34px; height: 24px; margin: 13px 0 0 38px; }

/* Center */
.center { flex: none; width: 1688px; margin-left: 4px; display: flex; flex-direction: column; min-width: 0; }
.tabs { height: 43px; display: flex; flex: none; background: #3f3f3f; }
.tab { display: flex; align-items: center; height: 43px; padding: 0 17px 0 14px; font-size: 16px; font-weight: 600; color: #a8a8a8; border-right: 1px solid #4e4e4e; white-space: nowrap; flex: none; }
.tab span { flex: 1; }
.tab .x { width: 10px; height: 10px; color: #bdbdbd; margin-top: -4px; }
.t1 { width: 457px; }
.t2 { width: 403px; }
.t3 { width: 425px; }
.tab.active { width: 341px; background: #535353; color: #f0f0f0; border-right: none; }
.tab.active .x { color: #f0f0f0; }
.stage { flex: 1; min-height: 0; display: flex; }
.canvas { width: 1664px; background: #5f5f5f; position: relative; overflow: hidden; flex: none; }
.vscroll { width: 24px; background: #4a4a4a; display: flex; flex-direction: column; align-items: center; position: relative; padding-top: 10px; flex: none; }
.vscroll .chev { color: #8f8f8f; }
.vthumb { width: 20px; height: 37px; border-radius: 9px; background: #5c5c5c; margin: 419px 4px 0 0; }
.vscroll .chev:last-child { margin-top: auto; margin-bottom: 9px; }
.status { height: 24px; display: flex; flex: none; }
.st-left { width: 648px; background: #535353; display: flex; align-items: flex-start; padding: 2px 0 0 6px; overflow: hidden; flex: none; }
.sinput { background: #404040; color: #e8e8e8; font-size: 15px; height: 22px; line-height: 27px; padding-left: 4px; flex: none; border-radius: 2px 0 0 0; }
.s-zoom { width: 75px; }
.s-page { width: 60px; margin-left: 13px; }
.scaret { width: 27px; height: 22px; background: #4a4a4a; display: flex; align-items: center; justify-content: center; padding-top: 8px; flex: none; border-left: 1px solid #5e5e5e; }
.nav { height: 16px; margin-top: 6px; flex: none; }
.n1 { width: 37px; margin-left: 13px; }
.n2 { width: 37px; margin-left: 15px; }
.stype { color: #b4b4b4; text-align: center; font-size: 15px; line-height: 27px; width: 190px; margin-left: 67px; flex: none; }
.n3 { width: 9px; margin-left: 64px; }
.hscroll { width: 1016px; background: #4a4a4a; display: flex; align-items: center; padding: 0 8px 0 6px; flex: none; }
.hscroll .chev { color: #8f8f8f; }
.hthumb { width: 37px; height: 23px; margin-left: 495px; background: #5c5c5c; border-radius: 10px; }
.hscroll .chev.right { margin-left: auto; }
.corner { flex: 1; background: #535353; }

/* Artboards */
.artboard { position: absolute; background: #fff; display: flex; flex-direction: column; font-family: "Lato", "Open Sans", sans-serif; color: #111; }
.ab1 { left: 147px; top: 186px; width: 960px; height: 541px; outline: 1px solid #9a9a9a; }
.ab2 { left: 1165px; top: 187px; width: 300px; height: 540px; outline: 1px solid #000; }
.ab-head { height: 91px; flex: none; display: flex; align-items: center; border-bottom: 2px solid #a55a6e; padding-top: 1px; }
.ab2 .ab-head { height: 90px; }
.ab1 .ab-head { padding-left: 388px; }
.ab2 .ab-head { padding-left: 52px; }
.logo { width: 53px; height: 52px; }
.brand { font-family: "Lato", sans-serif; font-weight: 700; font-size: 34.500px; line-height: 40px; color: #0c0c0c; margin: 4px 0 0 8px; letter-spacing: .3px; }
.form { flex: 1; display: flex; flex-direction: column; min-height: 0; }
.f1 { padding: 49px 0 0 330px; width: 643px; }
.f2 { padding: 96px 0 0 58px; width: 250px; }
.form h1 { margin: 0; font-weight: 300; text-align: center; white-space: nowrap; color: #000; }
.f1 h1 { font-size: 19.500px; line-height: 24px; }
.f2 h1 { font-size: 11.900px; line-height: 14px; font-weight: 400; }
.rule { background: #808080; flex: none; }
.f1 .r1 { height: 1px; margin-top: 12px; }
.f1 .r2 { height: 1px; margin-top: 15px; }
.f2 .r1 { height: 1px; margin-top: 7px; }
.f2 .r2 { height: 2px; margin-top: 7px; background: #bbb; }
.field { border: 2px solid #c792a2; color: #6f6f6f; flex: none; white-space: nowrap; }
.f1 .field { font-size: 12.500px; padding-left: 13px; line-height: 19px; }
.f1 .fa { height: 22px; margin-top: 11px; }
.f1 .fb { height: 21px; margin-top: 15px; }
.f2 .field { font-size: 8px; padding-left: 8px; line-height: 10px; }
.f2 .fa { height: 14px; margin-top: 6px; }
.f2 .fb { height: 14px; margin-top: 8px; }
.forgot { text-align: center; font-weight: 700; white-space: nowrap; flex: none; }
.f1 .forgot { font-size: 6.800px; line-height: 10px; margin-top: 6px; padding-right: 10px; }
.f2 .forgot { font-size: 4.500px; line-height: 6px; margin-top: 3px; padding-right: 5px; }
.pill { border-radius: 15px; color: #fff; text-align: center; flex: none; white-space: nowrap; position: relative; }
.login { background: #65b8bf; border: 2px solid #a05a6c; }
.signup { background: #8499e8; }
.f1 .pill { height: 28px; font-size: 12.500px; line-height: 22px; margin-top: 6px; }
.f1 .login { padding-right: 6px; }
.f1 .signup { margin-top: 10px; border: 2px solid #5a7ae8; font-size: 10px; line-height: 25px; }
.f2 .pill { height: 18px; margin-top: 5px; font-size: 7.500px; line-height: 13px; }
.f2 .signup { border: 2px solid #a05a6c; font-size: 6.500px; line-height: 14px; font-weight: 700; margin-top: 6px; }
.noacc { text-align: center; font-weight: 700; white-space: nowrap; flex: none; }
.f1 .noacc { font-size: 9.500px; line-height: 10px; margin-top: 29px; padding-right: 10px; }
.f2 .noacc { font-size: 6px; line-height: 8px; margin-top: 16px; padding-right: 3px; }
.hint { position: absolute; left: 147px; top: -14px; color: #ff5ce6; font-family: "Open Sans", sans-serif; font-size: 9.500px; line-height: 12px; font-weight: 600; }
.cursor { position: absolute; left: 141px; top: -7px; color: #222; font-size: 10px; line-height: 10px; }
.ab-foot { height: 65px; flex: none; background: #a05a6c; border-top: 1px solid #c99aa7; border-bottom: 1px solid #cfc0c4; position: relative; display: flex; flex-direction: column; }
.social { display: flex; }
.ab1 .social { padding: 16px 0 0 409px; gap: 8px; }
.ab1 .social svg { width: 30px; height: 30px; }
.ab2 .social { padding: 20px 0 0 95px; gap: 6px; }
.ab2 .social svg { width: 23px; height: 23px; }
.copy { color: #fff; white-space: nowrap; font-weight: 700; }
.ab1 .copy { font-size: 8.300px; line-height: 10px; margin: 2px 0 0 15px; }
.ab2 .copy { font-size: 3.800px; line-height: 5px; margin: 11px 0 0 9px; }

/* Dock */
.dock { flex: 1; margin-left: 2px; display: flex; min-width: 0; background: #535353; }
.dock-col { width: 61px; flex: none; border-right: 3px solid #454545; display: flex; flex-direction: column; }
.dock-col.two { flex: 1; border-right: none; }
.dgroup { display: flex; flex-direction: column; align-items: center; border-bottom: 2px solid #3d3d3d; flex: none; padding-left: 3px; }
.d2i { height: 103px; }
.d3i { height: 146px; }
.dgroup .grip-h { margin-top: 3px; width: 28px; margin-bottom: 11px; }
.dtool { width: 30px; height: 30px; margin-bottom: 13px; display: flex; align-items: center; justify-content: center; flex: none; }
.dtool:last-child { margin-bottom: 0; }
.dtool svg { width: 30px; height: 30px; }
.dtool svg.cc { width: 34px; height: 24px; }
.grad-dock { width: 27px; height: 18px; background: linear-gradient(90deg, #d0d0d0, #666 60%, #b0b0b0); border: 1px solid #c8c8c8; }
```
